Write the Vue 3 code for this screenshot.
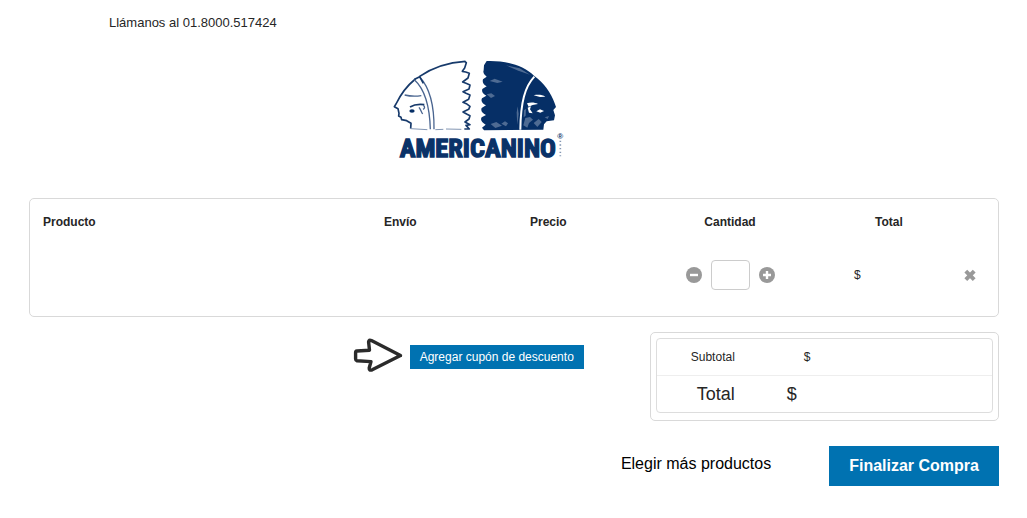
<script setup>
import { ref } from 'vue';

const quantity = ref('');
const currency = '$';

const decrease = () => {
  const current = Number(quantity.value) || 0;
  quantity.value = current > 1 ? String(current - 1) : '';
};

const increase = () => {
  quantity.value = String((Number(quantity.value) || 0) + 1);
};

const removeItem = () => {
  quantity.value = '';
};
</script>

<template>
  <main class="checkout">
    <header class="checkout__header">
      <p class="checkout__phone">Llámanos al 01.8000.517424</p>
      <svg class="logo" viewBox="24 15 540 324" role="img" aria-label="Americanino">
        <!-- outlined head -->
        <g class="logo__line">
          <path d="M256 34 C208 37 160 51 119 79" />
          <path d="M254 34 L259 38 L254 54 L247 64 L257 66 L268 70 L264 84 L248 96 L258 100 L270 105 L267 117 L249 125 L258 130 L270 135 L266 148 L249 157 L259 161 L270 169 L266 178 L249 186 L260 192 L270 197 L267 207 L255 216 L270 224 L258 226 L268 237 L253 237" />
          <path d="M106 87 C84 105 60 137 48 162 L43 170 L54 176 L57 190 L56 198 L63 202 L65 209 L80 212 L93 220 L92 236" />
          <path d="M92 236 L142 239 M166 239 L190 238 M198 237 L244 238" class="logo__line--thin" />
          <path d="M103 89 C133 116 149 161 151 238" class="logo__line--soft" />
          <path d="M119 81 C148 112 163 166 162 238" class="logo__line--soft" />
          <path d="M104 88 L119 80 L130 100" />
          <path d="M74 135 C90 139 110 139 124 137" class="logo__line--soft" />
          <path d="M90 171 C103 163 117 162 133 164" />
          <path d="M117 172 C123 180 124 186 128 192 M130 166 C136 171 134 176 129 178" class="logo__line--soft" />
        </g>
        <ellipse class="logo__fill" cx="96" cy="183" rx="8" ry="5" />

        <!-- solid head -->
        <path
          class="logo__fill"
          d="M320 33 C372 31 428 43 462 77 C491 97 514 129 524 160 L528 171 L520 180 L525 196 L522 211 L500 214 L492 223 L490 239 L312 241 L306 233 L317 224 Q298 213 305 202 L318 195 Q300 186 305 174 L318 166 Q300 157 306 145 L319 137 Q303 129 307 117 L320 109 Q305 101 309 88 L320 80 Q307 72 311 61 L312 46 Z"
        />
        <path class="logo__band" d="M463 80 C435 110 422 155 421 239" />
        <g class="logo__cut">
          <path d="M461 136 C475 133 488 135 496 140 L480 141 Z" />
          <path d="M441 160 C451 156 465 157 474 162 L458 165 L446 170 Z" />
          <path d="M443 173 L453 169 L450 178 L458 190 L447 188 Z" />
          <path d="M469 184 L480 178 L492 183 L481 188 Z" />
        </g>
        <g class="logo__wear">
          <path d="M329 93 L344 86 L368 95 L352 99 Z" />
          <path d="M320 133 L334 130 L345 138 L333 144 Z" />
          <path d="M378 46 L419 55 L450 74 L415 62 Z" />
          <path d="M332 222 L349 216 L366 227 L346 234 Z" />
          <path d="M364 221 L375 214 L384 220 L378 229 Z" />
          <path d="M410 188 L413 169 L416 192 L412 224 Z" />
          <path d="M430 226 L436 204 L450 201 L459 209 L447 219 L442 233 Z" />
          <path d="M461 219 L476 207 L485 216 L472 231 Z" />
          <path d="M432 181 L438 176 L437 197 L431 202 Z" />
          <path d="M494 202 L507 198 L503 207 Z" />
        </g>

        <text class="logo__name" x="59" y="320">AMERICANINO</text>
        <text class="logo__mark" x="532" y="267">®</text>
        <path class="logo__dots" d="M541 272 V319" />
      </svg>
    </header>

    <section class="cart">
      <table class="cart__table">
        <colgroup>
          <col />
          <col class="cart__col-shipping" />
          <col class="cart__col-price" />
          <col class="cart__col-quantity" />
          <col class="cart__col-total" />
          <col class="cart__col-remove" />
        </colgroup>
        <thead>
          <tr>
            <th scope="col">Producto</th>
            <th scope="col">Envío</th>
            <th scope="col">Precio</th>
            <th scope="col" class="cart__cell--center">Cantidad</th>
            <th scope="col" class="cart__head-total">Total</th>
            <td></td>
          </tr>
        </thead>
        <tbody>
          <tr>
            <td></td>
            <td></td>
            <td></td>
            <td>
              <div class="quantity">
                <button type="button" class="icon-button" aria-label="Disminuir cantidad" @click="decrease">
                  <svg width="16" height="16" viewBox="0 0 16 16">
                    <circle cx="8" cy="8" r="8" fill="#999" />
                    <path d="M4 8 H12" stroke="#fff" stroke-width="2.4" />
                  </svg>
                </button>
                <input v-model="quantity" class="quantity__input" type="text" inputmode="numeric" aria-label="Cantidad" />
                <button type="button" class="icon-button" aria-label="Aumentar cantidad" @click="increase">
                  <svg width="16" height="16" viewBox="0 0 16 16">
                    <circle cx="8" cy="8" r="8" fill="#999" />
                    <path d="M4 8 H12 M8 4 V12" stroke="#fff" stroke-width="2.4" />
                  </svg>
                </button>
              </div>
            </td>
            <td class="cart__amount">{{ currency }}</td>
            <td>
              <button type="button" class="icon-button icon-button--remove" aria-label="Eliminar producto" @click="removeItem">
                <svg width="16" height="16" viewBox="0 0 16 16">
                  <path d="M3.8 4.2 L12.2 12.6 M12.2 4.2 L3.8 12.6" stroke="#999" stroke-width="4" />
                </svg>
              </button>
            </td>
          </tr>
        </tbody>
      </table>
    </section>

    <section class="summary">
      <div class="coupon">
        <svg class="coupon__arrow" width="50" height="36" viewBox="0 0 50 36" aria-hidden="true">
          <path
            d="M4 14 L16.5 13.2 L15.6 5 Q15.8 2.4 18.4 3.6 L47.5 18.6 L19.2 32.8 Q16 34 16.2 31 L18 24.6 L4 23.8 Q2.6 23.4 2.6 22 L2.6 15.6 Q2.6 14.2 4 14 Z"
            fill="#fff"
            stroke="#2b2b2b"
            stroke-width="3.4"
            stroke-linejoin="round"
          />
        </svg>
        <button type="button" class="coupon__button">Agregar cupón de descuento</button>
      </div>

      <div class="totals">
        <table class="totals__table">
          <tbody>
            <tr>
              <th scope="row">Subtotal</th>
              <td>{{ currency }}</td>
            </tr>
            <tr class="totals__final">
              <th scope="row">Total</th>
              <td>{{ currency }}</td>
            </tr>
          </tbody>
        </table>
      </div>
    </section>

    <footer class="actions">
      <a href="#" class="actions__more">Elegir más productos</a>
      <button type="button" class="actions__buy">Finalizar Compra</button>
    </footer>
  </main>
</template>

<style>
body {
  margin: 0;
  background: #fff;
}
</style>

<style scoped>
.checkout {
  padding: 14px 28px 32px 29px;
  color: #262626;
  font-family: "Liberation Sans", Arial, sans-serif;
  font-size: 12px;
  line-height: 18px;
}

.checkout__header {
  display: flex;
  flex-direction: column;
  align-items: flex-start;
  gap: 23px;
}

.checkout__phone {
  margin: 0 0 0 80px;
  font-size: 13px;
}

.logo {
  display: block;
  width: 180px;
  height: 108px;
  margin-left: 37%;
}

.logo__line {
  fill: none;
  stroke: #173a6b;
  stroke-width: 5;
  stroke-linejoin: round;
}

.logo__line--soft {
  stroke: #4a6590;
  stroke-width: 4;
}

.logo__line--thin {
  stroke: #8396b3;
  stroke-width: 3;
}

.logo__fill {
  fill: #062f66;
}

.logo__band {
  fill: none;
  stroke: #fff;
  stroke-width: 6;
}

.logo__cut {
  fill: #fff;
}

.logo__wear {
  fill: #7f93b2;
  opacity: 0.6;
}

.logo__name {
  fill: #0a3268;
  stroke: #0a3268;
  stroke-width: 4;
  font-family: "Liberation Sans Narrow", "Roboto Condensed", "Open Sans Condensed", Roboto, sans-serif;
  font-size: 79px;
  font-weight: 700;
}

.logo__mark {
  fill: #0a3268;
  font-size: 24px;
  font-weight: 700;
}

.logo__dots {
  stroke: #8396b3;
  stroke-width: 5;
  stroke-dasharray: 4 7;
}

.cart {
  margin-top: 35px;
  border: 1px solid #d9d9d9;
  border-radius: 5px;
}

.cart__table {
  width: 100%;
  border-collapse: collapse;
  table-layout: fixed;
}

.cart__col-shipping {
  width: 146px;
}

.cart__col-price {
  width: 127px;
}

.cart__col-quantity {
  width: 172px;
}

.cart__col-total {
  width: 125px;
}

.cart__col-remove {
  width: 57px;
}

.cart__table th {
  height: 46px;
  padding: 0 13px;
  text-align: left;
}

.cart__table tbody td {
  padding: 15px 13px 26px;
}

.cart__table .cart__cell--center {
  text-align: center;
}

.cart__table .cart__head-total {
  padding-left: 59px;
}

.cart__table .cart__amount {
  padding-left: 38px;
}

.quantity {
  display: flex;
  align-items: center;
  justify-content: center;
  gap: 9px;
}

.quantity__input {
  box-sizing: border-box;
  width: 39px;
  height: 30px;
  padding: 4px;
  border: 1px solid #ccc;
  border-radius: 4px;
  font: inherit;
  text-align: center;
}

.icon-button {
  display: block;
  padding: 0;
  border: 0;
  background: none;
  cursor: pointer;
}

.icon-button svg {
  display: block;
}

.icon-button--remove {
  margin: 0 auto;
}

.summary {
  display: flex;
  align-items: flex-start;
  justify-content: flex-end;
  gap: 66px;
  margin-top: 15px;
}

.coupon {
  display: flex;
  align-items: center;
  gap: 7px;
  padding-top: 5px;
}

.coupon__arrow {
  display: block;
  margin-bottom: 4px;
}

.coupon__button {
  height: 24px;
  padding: 0 10px;
  border: 0;
  background: #0072b1;
  color: #fff;
  font: 12px/18px "Liberation Sans", Arial, sans-serif;
  cursor: pointer;
}

.totals {
  box-sizing: border-box;
  width: 36%;
  padding: 5px 5px 7px;
  border: 1px solid #d9d9d9;
  border-radius: 5px;
}

.totals__table {
  width: 100%;
  border: 1px solid #ddd;
  border-radius: 4px;
  border-spacing: 0;
}

.totals__table th,
.totals__table td {
  box-sizing: border-box;
  height: 36px;
  padding: 0;
  font-weight: 400;
}

.totals__table th {
  width: 78px;
  text-align: right;
}

.totals__table td {
  padding-left: 69px;
}

.totals__table .totals__final th,
.totals__table .totals__final td {
  height: 37px;
  border-top: 1px solid #eee;
  font-size: 18px;
}

.totals__table .totals__final td {
  padding-left: 52px;
}

.actions {
  display: flex;
  align-items: center;
  justify-content: flex-end;
  gap: 58px;
  margin-top: 25px;
  font-size: 16px;
}

.actions__more {
  margin-bottom: 4px;
  color: #000;
  text-decoration: none;
}

.actions__buy {
  height: 40px;
  padding: 0 20px;
  border: 0;
  background: #0072b1;
  color: #fff;
  font: 700 16px/18px "Liberation Sans", Arial, sans-serif;
  cursor: pointer;
}
</style>
